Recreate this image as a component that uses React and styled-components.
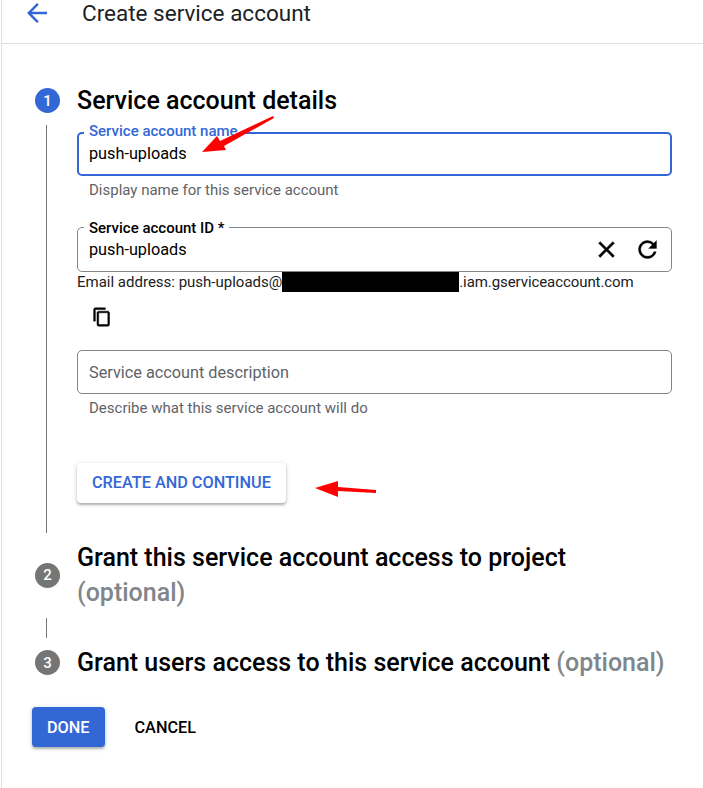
import React from 'react';
import styled, { createGlobalStyle } from 'styled-components';

const Global = createGlobalStyle`
  html, body { margin: 0; padding: 0; background: #fff; }
  body { font-family: Roboto, "Liberation Sans", sans-serif; color: #000; }
`;

const Page = styled.div`
  position: relative;
  width: 702px;
  height: 788px;
  margin-left: 1px;
  border-left: 1px solid #e0e0e0;
  box-sizing: border-box;
  overflow: hidden;
`;

const Header = styled.header`
  display: flex;
  align-items: center;
  height: 44px;
  box-sizing: border-box;
  padding: 0 0 18px 20px;
  border-bottom: 1px solid #e0e0e0;
  h1 {
    margin: 0 0 0 30px;
    font-size: 22.5px;
    font-weight: 400;
    line-height: 26px;
    color: #202124;
  }
`;

const Main = styled.main`
  padding: 39px 31px 0 33px;
`;

const StepHead = styled.div`
  display: flex;
  align-items: center;
  gap: 17px;
`;

const Circle = styled.span`
  flex: none;
  display: flex;
  align-items: center;
  justify-content: center;
  width: 25px;
  height: 25px;
  border-radius: 50%;
  background: ${p => (p.$active ? '#3367d6' : '#757575')};
  color: #fff;
  font-size: 15px;
  font-weight: 500;
`;

const StepTitle = styled.h2`
  margin: 0;
  font-size: 25px;
  font-weight: 500;
  line-height: 35px;
  color: #000;
  span { color: #80868b; }
`;

const StepBody = styled.div`
  margin: 7px 0 7px 11px;
  padding: 7px 0 29px 30px;
  border-left: 1px solid #757575;
`;

const Connector = styled.div`
  width: 1px;
  height: 20px;
  margin: 8px 0 7px 11px;
  background: #757575;
`;

const Field = styled.div`
  position: relative;
  display: flex;
  align-items: center;
  justify-content: space-between;
  height: ${p => (p.$short ? '44px' : '45px')};
  box-sizing: border-box;
  padding: ${p => (p.$focused ? '0 10px 2px' : '0 10px 0 11px')};
  border: ${p => (p.$focused ? '2px solid #3367d6' : '1px solid #80868b')};
  border-radius: 5px;
  font-size: 16.25px;
  color: ${p => (p.$placeholder ? '#5f6368' : '#000')};
`;

const FieldLabel = styled.label`
  position: absolute;
  left: ${p => (p.$focused ? '5px' : '6px')};
  top: ${p => (p.$focused ? '-11px' : '-8px')};
  padding: 0 4px 0 5px;
  background: #fff;
  font-size: 15px;
  line-height: 16px;
  font-weight: 500;
  color: ${p => (p.$focused ? '#3367d6' : '#000')};
`;

const Helper = styled.div`
  margin: 6px 0 29px 12px;
  font-size: 15px;
  line-height: 16px;
  color: #5f6368;
`;

const Actions = styled.div`
  display: flex;
  align-items: center;
  gap: 14px;
  svg { display: block; }
`;

const EmailRow = styled.div`
  height: 21px;
  margin-top: -1px;
  display: flex;
  align-items: center;
  font-size: 15px;
  white-space: nowrap;
  color: #202124;
`;

const Redacted = styled.span`
  flex: none;
  width: 177px;
  height: 21px;
  background: #000;
`;

const EmailDomain = styled.span`
  letter-spacing: -0.08px;
`;

const CopyBtn = styled.div`
  margin: 15px 0 23px 15px;
  height: 20px;
  svg { display: block; }
`;

const RaisedButton = styled.button`
  display: inline-block;
  height: 40px;
  padding: 0 15px ${p => (p.$primary ? '0' : '2px')};
  border: 0;
  border-radius: 4px;
  font-family: inherit;
  font-size: 16.25px;
  font-weight: 500;
  background: ${p => (p.$primary ? '#3367d6' : '#fff')};
  color: ${p => (p.$primary ? '#fff' : '#3367d6')};
  box-shadow: 0 2px 2px rgba(60, 64, 67, 0.3), 0 1px 4px 1px rgba(60, 64, 67, 0.15);
`;

const CreateWrap = styled.div`
  margin-top: 47px;
  height: 41px;
`;

const Footer = styled.div`
  display: flex;
  align-items: center;
  margin: 27px 0 0 -3px;
  gap: 30px;
`;

const CancelButton = styled.button`
  padding: 0;
  border: 0;
  background: none;
  font-family: inherit;
  font-size: 16.25px;
  font-weight: 500;
  color: #000;
`;

const Arrow = styled.svg`
  position: absolute;
  left: ${p => p.$x}px;
  top: ${p => p.$y}px;
  pointer-events: none;
`;

export default function App() {
  return (
    <Page>
      <Global />
      <Header>
        <svg width="30" height="30" viewBox="0 0 24 24" fill="#3367d6">
          <path d="M20 11H7.83l5.59-5.59L12 4l-8 8 8 8 1.41-1.41L7.83 13H20v-2z" />
        </svg>
        <h1>Create service account</h1>
      </Header>
      <Main>
        <StepHead>
          <Circle $active>1</Circle>
          <StepTitle>Service account details</StepTitle>
        </StepHead>
        <StepBody>
          <Field $focused $short>
            <FieldLabel $focused>Service account name</FieldLabel>
            <span>push-uploads</span>
          </Field>
          <Helper>Display name for this service account</Helper>
          <Field>
            <FieldLabel>Service account ID *</FieldLabel>
            <span>push-uploads</span>
            <Actions>
              <svg width="27" height="27" viewBox="0 0 24 24" fill="#000" stroke="#000" strokeWidth="0.5">
                <path d="M19 6.41 17.59 5 12 10.59 6.41 5 5 6.41 10.59 12 5 17.59 6.41 19 12 13.41 17.59 19 19 17.59 13.41 12z" />
              </svg>
              <svg width="27" height="27" viewBox="0 0 24 24" fill="#000" stroke="#000" strokeWidth="0.3">
                <path d="M17.65 6.35A7.958 7.958 0 0 0 12 4c-4.42 0-7.99 3.58-7.99 8s3.57 8 7.99 8c3.73 0 6.84-2.55 7.73-6h-2.08A5.99 5.99 0 0 1 12 18c-3.31 0-6-2.69-6-6s2.69-6 6-6c1.66 0 3.14.69 4.22 1.78L13 11h7V4l-2.35 2.35z" />
              </svg>
            </Actions>
          </Field>
          <EmailRow>
            Email address: push-uploads@<Redacted /><EmailDomain>.iam.gserviceaccount.com</EmailDomain>
          </EmailRow>
          <CopyBtn>
            <svg width="20" height="20" viewBox="0 0 24 24" fill="#000" stroke="#000" strokeWidth="0.6">
              <path d="M16 1H4c-1.1 0-2 .9-2 2v14h2V3h12V1zm3 4H8c-1.1 0-2 .9-2 2v14c0 1.1.9 2 2 2h11c1.1 0 2-.9 2-2V7c0-1.1-.9-2-2-2zm0 16H8V7h11v14z" />
            </svg>
          </CopyBtn>
          <Field $placeholder $short>
            <span>Service account description</span>
          </Field>
          <Helper>Describe what this service account will do</Helper>
          <CreateWrap>
            <RaisedButton>CREATE AND CONTINUE</RaisedButton>
          </CreateWrap>
        </StepBody>
        <StepHead>
          <Circle>2</Circle>
          <StepTitle>
            Grant this service account access to project <span>(optional)</span>
          </StepTitle>
        </StepHead>
        <Connector />
        <StepHead>
          <Circle>3</Circle>
          <StepTitle>
            Grant users access to this service account <span>(optional)</span>
          </StepTitle>
        </StepHead>
        <Footer>
          <RaisedButton $primary>DONE</RaisedButton>
          <CancelButton>CANCEL</CancelButton>
        </Footer>
      </Main>
      <Arrow $x={188} $y={105} width="90" height="55" viewBox="0 0 90 55">
        <path d="M12 47 L27 31 L30 36 L83 11 L84 13 L34 41 L36 45 Z" fill="#f00" />
      </Arrow>
      <Arrow $x={308} $y={475} width="70" height="30" viewBox="0 0 70 30">
        <path d="M5 13 L28 6 L28 12 L66 15 L66 18 L28 16 L28 22 Z" fill="#f00" />
      </Arrow>
    </Page>
  );
}
